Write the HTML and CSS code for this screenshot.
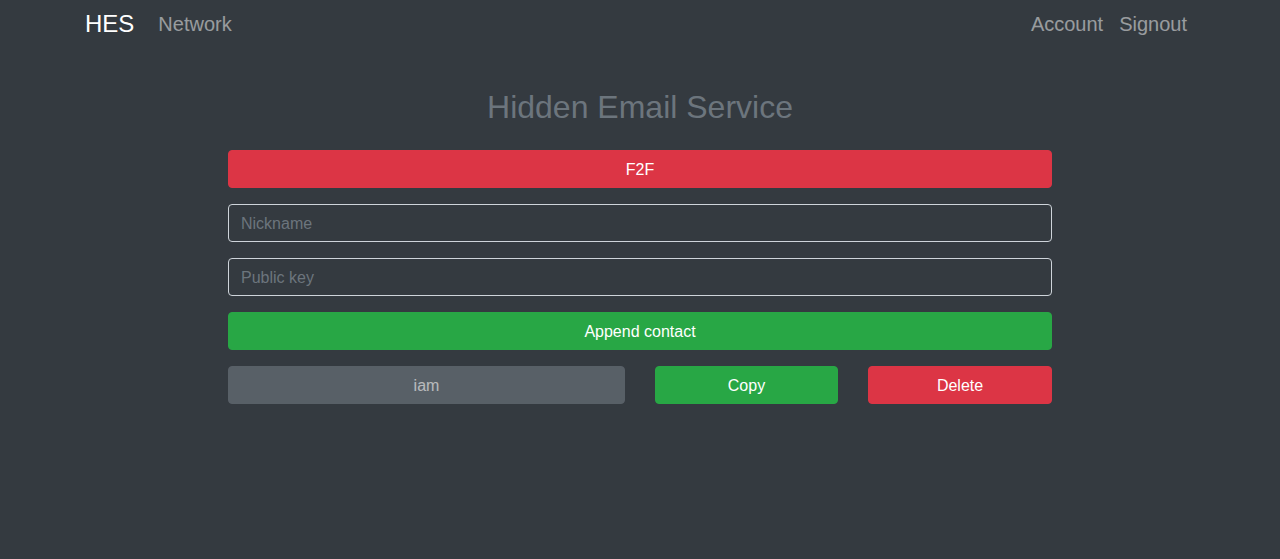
FILE: index.html
```html
<!DOCTYPE html>
<html lang="en">
<head>
<meta charset="utf-8">
<title>Hidden Email Service</title>
<link rel="stylesheet" href="styles.css">
</head>
<body>
<nav class="navbar">
  <div class="nav-left">
    <a class="brand" href="#">HES</a>
    <a class="nav-link" href="#">Network</a>
  </div>
  <div class="nav-right">
    <a class="nav-link" href="#">Account</a>
    <a class="nav-link" href="#">Signout</a>
  </div>
</nav>
<main class="main">
  <h2 class="title">Hidden Email Service</h2>
  <div class="form">
    <button class="btn btn-danger">F2F</button>
    <input class="input" type="text" placeholder="Nickname">
    <input class="input" type="text" placeholder="Public key">
    <button class="btn btn-success">Append contact</button>
    <div class="contact-row">
      <button class="btn btn-secondary" disabled>iam</button>
      <button class="btn btn-success">Copy</button>
      <button class="btn btn-danger">Delete</button>
    </div>
  </div>
</main>
</body>
</html>
```

FILE: styles.css
```css
* { box-sizing: border-box; }
html, body {
  margin: 0;
  padding: 0;
  background: #343a40;
  font-family: "Liberation Sans", Arial, Helvetica, sans-serif;
  color: #fff;
  height: 100%;
}
a { text-decoration: none; }

.navbar {
  width: 1140px;
  margin: 0 auto;
  padding: 0 15px;
  height: 48px;
  display: flex;
  align-items: center;
  justify-content: space-between;
}
.nav-left, .nav-right {
  display: flex;
  align-items: center;
}
.brand {
  color: #fff;
  font-size: 24px;
  line-height: 30px;
  margin-right: 16px;
}
.nav-link {
  color: rgba(255,255,255,0.5);
  font-size: 20px;
  line-height: 30px;
  padding: 0 8px;
}

.main {
  width: 824px;
  margin: 0 auto;
}
.title {
  margin: 40px 0 24px;
  font-size: 32px;
  line-height: 1.2;
  font-weight: 400;
  text-align: center;
  color: #6c757d;
}
.form {
  display: flex;
  flex-direction: column;
  gap: 16px;
}
.btn {
  display: block;
  width: 100%;
  height: 38px;
  border: 1px solid transparent;
  border-radius: 4px;
  font-family: inherit;
  font-size: 16px;
  line-height: 24px;
  padding: 7px 12px 5px;
  color: #fff;
  text-align: center;
  cursor: pointer;
}
.btn-danger { background: #dc3545; border-color: #dc3545; }
.btn-success { background: #28a745; border-color: #28a745; }
.btn-secondary {
  background: #6c757d;
  border-color: #6c757d;
  opacity: 0.65;
  cursor: default;
}
.input {
  display: block;
  width: 100%;
  height: 38px;
  padding: 7px 12px 5px;
  font-family: inherit;
  font-size: 16px;
  line-height: 24px;
  color: #fff;
  background: transparent;
  border: 1px solid #ced4da;
  border-radius: 4px;
  outline: none;
}
.input::placeholder { color: #6c757d; }

.contact-row {
  display: grid;
  grid-template-columns: 397px 183px 184px;
  column-gap: 30px;
}
```
